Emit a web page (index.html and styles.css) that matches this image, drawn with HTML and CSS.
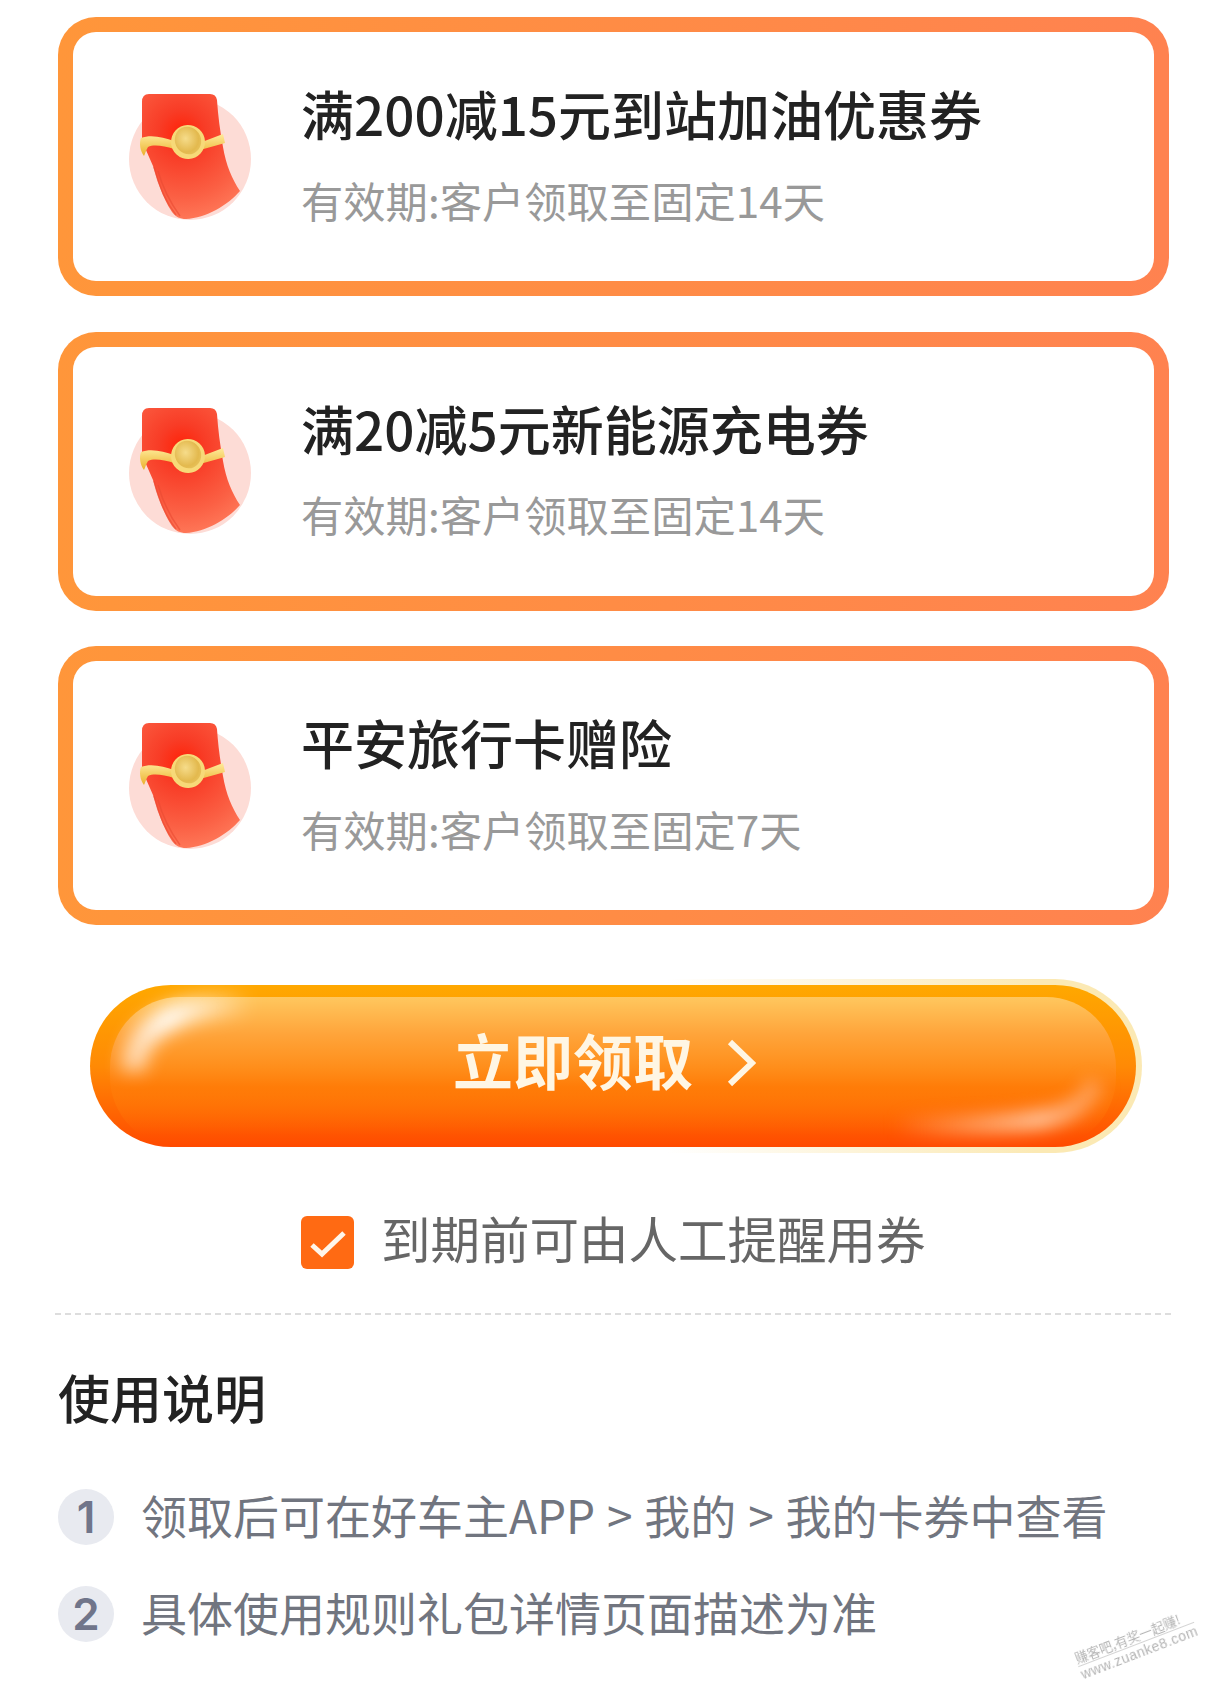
FILE: index.html
```html
<!DOCTYPE html>
<html lang="zh-CN">
<head>
    <meta charset="UTF-8">
    <meta name="viewport" content="width=device-width, initial-scale=1.0">
    <title>立即领取</title>
    <link rel="stylesheet" href="styles.css">
</head>
<body>
    <svg class="sprite" aria-hidden="true">
        <defs>
            <radialGradient id="redGrad" gradientUnits="userSpaceOnUse" cx="72" cy="54" r="92">
                <stop offset="0" stop-color="#ff2208"/>
                <stop offset="0.25" stop-color="#f83c26"/>
                <stop offset="0.7" stop-color="#fb6044"/>
                <stop offset="1" stop-color="#ff7c5c"/>
            </radialGradient>
            <linearGradient id="bandGrad" x1="0" y1="0" x2="0" y2="1">
                <stop offset="0" stop-color="#ffeb9a"/>
                <stop offset="1" stop-color="#eab02c"/>
            </linearGradient>
            <radialGradient id="coinGrad" cx="0.45" cy="0.4" r="0.65">
                <stop offset="0" stop-color="#f6dc8a"/>
                <stop offset="0.75" stop-color="#e3b94e"/>
                <stop offset="1" stop-color="#e8c25c"/>
            </radialGradient>
            <symbol id="packet" viewBox="0 0 160 150">
                <circle cx="80" cy="80" r="61" fill="#fddcd6"/>
                <path d="M39 15 H100 Q106 15 107 21 C108 36 110 52 113 68 C116 86 122 100 130 112 C118 126 96 139 76 140 C70 140 66 138 62 133 C52 118 47 100 43 87 L32 62 V23 Q32 15 39 15 Z" fill="url(#redGrad)"/>
                <path d="M48 92 C52 106 59 122 70 137 M44 88 C48 104 55 122 66 136" fill="none" stroke="#ea4a32" stroke-width="1.5" opacity="0.6"/>
                <path d="M31 59 C42 55 54 59 64 62 L92 63 L113 55 L115 64 L90 71 L64 70 C54 67 44 65 38 68 C36 71 35 75 34 77 C30 72 29 64 31 59 Z" fill="url(#bandGrad)"/>
                <ellipse cx="78" cy="63" rx="17" ry="17" fill="#f7d978" transform="rotate(-25 78 63)"/>
                <ellipse cx="78" cy="61.5" rx="13" ry="14" fill="url(#coinGrad)" transform="rotate(-25 78 61.5)"/>
            </symbol>
            <linearGradient id="shineA" x1="0" y1="0" x2="1" y2="0">
                <stop offset="0" stop-color="#fff" stop-opacity="0.6"/>
                <stop offset="0.3" stop-color="#fff" stop-opacity="1"/>
                <stop offset="1" stop-color="#fff" stop-opacity="0"/>
            </linearGradient>
            <linearGradient id="shineB" x1="0" y1="0" x2="1" y2="0">
                <stop offset="0" stop-color="#ffc79c" stop-opacity="0"/>
                <stop offset="0.72" stop-color="#ffc39a" stop-opacity="0.95"/>
                <stop offset="1" stop-color="#ffb98c" stop-opacity="0.45"/>
            </linearGradient>
        </defs>
    </svg>

    <div class="page">
        <div class="coupon">
            <svg class="coupon-icon"><use href="#packet"/></svg>
            <div class="coupon-text">
                <div class="coupon-title">满200减15元到站加油优惠券</div>
                <div class="coupon-sub">有效期:客户领取至固定14天</div>
            </div>
        </div>
        <div class="coupon">
            <svg class="coupon-icon"><use href="#packet"/></svg>
            <div class="coupon-text">
                <div class="coupon-title">满20减5元新能源充电券</div>
                <div class="coupon-sub">有效期:客户领取至固定14天</div>
            </div>
        </div>
        <div class="coupon">
            <svg class="coupon-icon"><use href="#packet"/></svg>
            <div class="coupon-text">
                <div class="coupon-title">平安旅行卡赠险</div>
                <div class="coupon-sub">有效期:客户领取至固定7天</div>
            </div>
        </div>

        <div class="claim-ring">
            <button class="claim-btn" type="button">
                <span class="claim-face"></span>
                <svg class="shine-left" viewBox="0 0 170 100"><path d="M39 94 C39 58 66 28 158 27" fill="none" stroke="url(#shineA)" stroke-width="24"/></svg>
                <svg class="shine-right" viewBox="0 0 300 90"><path d="M85 68 C150 70 220 66 245 60 C268 54 282 42 288 24" fill="none" stroke="url(#shineB)" stroke-width="20"/></svg>
                <span class="claim-label">立即领取</span>
                <svg class="claim-arrow" viewBox="0 0 30 48"><path d="M4 3 L26 24 L4 45" fill="none" stroke="#fff6e4" stroke-width="6"/></svg>
            </button>
        </div>

        <div class="remind">
            <span class="check">
                <svg viewBox="0 0 53 53"><path d="M11 29 L21 38 L43 17" fill="none" stroke="#fff6ea" stroke-width="5"/></svg>
            </span>
            <span class="remind-text">到期前可由人工提醒用券</span>
        </div>

        <div class="divider"></div>

        <h2 class="usage-title">使用说明</h2>
        <div class="usage-row">
            <span class="num">1</span>
            <span class="usage-text">领取后可在好车主APP &gt; 我的 &gt; 我的卡券中查看</span>
        </div>
        <div class="usage-row">
            <span class="num">2</span>
            <span class="usage-text">具体使用规则礼包详情页面描述为准</span>
        </div>
    </div>

    <div class="watermark">
        <div class="wm-cn">赚客吧,有奖一起赚!</div>
        <div class="wm-url">www.zuanke8.com</div>
    </div>
</body>
</html>
```

FILE: styles.css
```css
html, body {
    margin: 0;
    padding: 0;
    background-color: #fff;
}
body {
    font-family: "Noto Sans CJK SC", "Noto Sans", sans-serif;
    height: 1699px;
    overflow: hidden;
    position: relative;
}
.sprite {
    position: absolute;
    width: 0;
    height: 0;
}
.page {
    padding: 17px 52px 0 58px;
}
.coupon {
    box-sizing: border-box;
    height: 279px;
    margin-bottom: 35.5px;
    border: 15px solid transparent;
    border-radius: 38px;
    background: linear-gradient(#fff, #fff) padding-box, linear-gradient(90deg, #ff963a, #ff8250) border-box;
    display: flex;
    align-items: center;
    padding-left: 37px;
}
.coupon-icon {
    width: 160px;
    height: 150px;
    flex: none;
    margin-top: -6px;
    filter: blur(0.6px);
}
.coupon-text {
    margin-left: 31px;
    margin-top: -4.5px;
}
.coupon-title {
    font-size: 53px;
    line-height: 62px;
    font-weight: 500;
    color: #222;
    white-space: nowrap;
}
.coupon-sub {
    font-size: 42.3px;
    line-height: 54px;
    margin-top: 28.5px;
    color: #999;
    white-space: nowrap;
}
.claim-ring {
    margin: 54px 0 0 26px;
    width: 1058px;
    height: 174px;
    box-sizing: border-box;
    padding: 6px;
    border-radius: 87px;
    background: linear-gradient(90deg, #fff 55%, #fbe9b4 90%);
}
.claim-btn {
    position: relative;
    display: flex;
    align-items: center;
    justify-content: center;
    width: 100%;
    height: 100%;
    padding: 0;
    border: none;
    border-radius: 81px;
    overflow: hidden;
    background: linear-gradient(#ffa800, #ff8a05 50%, #ff4a00);
    font-family: inherit;
}
.claim-face {
    position: absolute;
    left: 20px;
    right: 20px;
    top: 12px;
    bottom: 0;
    border-radius: 70px;
    background: linear-gradient(#ffc75e, #ffa43a 25%, rgba(255, 125, 10, 0.7) 60%, rgba(255, 80, 0, 0) 92%);
}
.shine-left {
    position: absolute;
    left: 4px;
    top: -8px;
    width: 170px;
    height: 100px;
    filter: blur(9px);
}
.shine-right {
    position: absolute;
    right: 28px;
    bottom: 0;
    width: 300px;
    height: 90px;
    filter: blur(8px);
}
.claim-label {
    position: relative;
    top: -7px;
    font-size: 60px;
    font-weight: 700;
    color: #fff6e4;
    line-height: 1;
    margin-right: 33px;
}
.claim-arrow {
    position: relative;
    top: -3px;
    width: 30px;
    height: 48px;
    margin-right: 17px;
}
.remind {
    margin: 63px 0 0 243px;
    display: flex;
    align-items: center;
    gap: 27px;
    height: 53px;
    font-size: 49.5px;
    line-height: 53px;
    color: #666;
}
.remind-text {
    margin-bottom: 10px;
}
.check {
    width: 53px;
    height: 53px;
    border-radius: 6px;
    background-color: #ff6a13;
    display: block;
}
.check svg {
    display: block;
    width: 53px;
    height: 53px;
}
.divider {
    margin: 44px 0 0 -3px;
    width: 1116px;
    border-top: 2px dashed #ddd;
}
.usage-title {
    margin: 47px 0 0 0;
    font-size: 52px;
    line-height: 70px;
    font-weight: 500;
    color: #222;
}
.usage-row {
    display: flex;
    align-items: center;
    gap: 27px;
    font-size: 46px;
    word-spacing: 1.5px;
    height: 56px;
    margin-top: 41px;
    color: #71757f;
    white-space: nowrap;
}
.usage-title + .usage-row {
    margin-top: 57px;
}
.usage-text {
    margin-bottom: 6px;
}
.num {
    width: 56px;
    height: 56px;
    flex: none;
    border-radius: 50%;
    background-color: #e8eaf0;
    color: #70758a;
    font-family: "Inter", sans-serif;
    font-size: 44px;
    font-weight: 600;
    line-height: 56px;
    text-align: center;
}
.watermark {
    position: absolute;
    left: 1074px;
    top: 1627px;
    color: #b4b4b4;
    transform: rotate(-21deg);
    filter: blur(0.5px);
}
.wm-cn {
    font-size: 13px;
    line-height: 17px;
    border-bottom: 1px solid #d4d4d4;
    white-space: nowrap;
}
.wm-url {
    font-family: "Liberation Sans", sans-serif;
    font-size: 14px;
    line-height: 16px;
    letter-spacing: 0.5px;
    white-space: nowrap;
}
```
